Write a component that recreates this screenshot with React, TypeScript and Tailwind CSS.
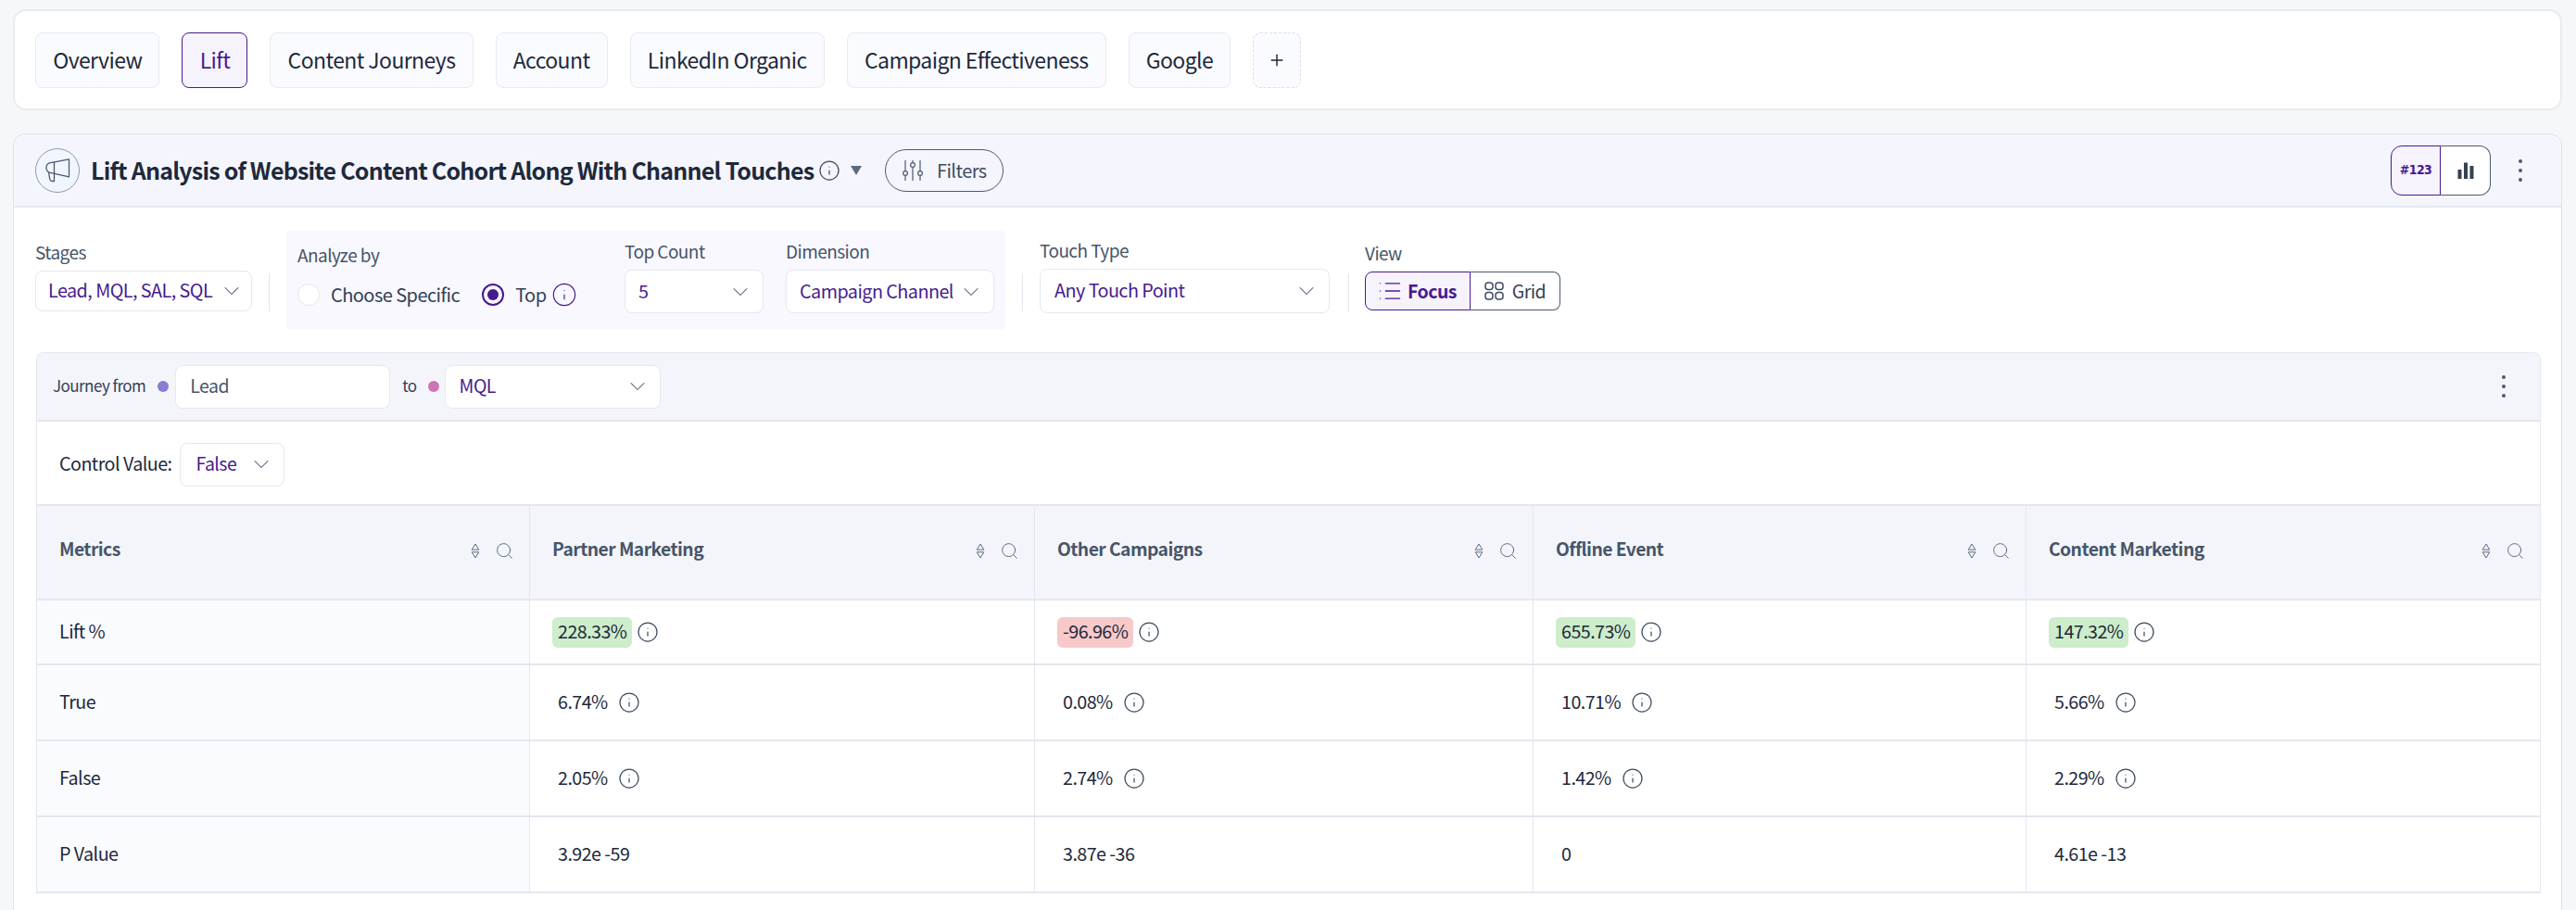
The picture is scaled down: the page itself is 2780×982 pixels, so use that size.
import { ChevronDown, Info, List, Plus, Search } from 'lucide-react';

const tabs = ['Overview', 'Lift', 'Content Journeys', 'Account', 'LinkedIn Organic', 'Campaign Effectiveness', 'Google'];

const columns = [
  { name: 'Metrics', cell: 'w-[532px]' },
  { name: 'Partner Marketing', cell: 'w-[545px]' },
  { name: 'Other Campaigns', cell: 'w-[538px]' },
  { name: 'Offline Event', cell: 'w-[532px]' },
  { name: 'Content Marketing', cell: 'flex-1' },
];

const rows = [
  { label: 'Lift %', height: 'h-[70px]', values: ['228.33%', '-96.96%', '655.73%', '147.32%'], badge: true },
  { label: 'True', height: 'h-[82px]', values: ['6.74%', '0.08%', '10.71%', '5.66%'], info: true },
  { label: 'False', height: 'h-[82px]', values: ['2.05%', '2.74%', '1.42%', '2.29%'], info: true },
  { label: 'P Value', height: 'h-[82px]', values: ['3.92e -59', '3.87e -36', '0', '4.61e -13'] },
];

function Kebab() {
  return (
    <svg width="6" height="26" viewBox="0 0 6 26" className="text-[#4b5a70]">
      <circle cx="3" cy="3" r="2" fill="currentColor" />
      <circle cx="3" cy="13" r="2" fill="currentColor" />
      <circle cx="3" cy="23" r="2" fill="currentColor" />
    </svg>
  );
}

function Megaphone() {
  return (
    <svg width="27" height="26" viewBox="0 0 27 26" fill="none" stroke="#4b5a70" strokeWidth="1.3" strokeLinejoin="round" strokeLinecap="round">
      <path d="M25.5 0.8 L4.5 4.8 C2 5.4 1 7.5 1 10 C1 12.5 2.2 14.6 4.5 15.2 L25.5 19.8 Z" />
      <path d="M9.5 4 V24.5 H7.2 C5.8 24.5 5 23.6 4.8 22.5 L3.5 14.8" />
    </svg>
  );
}

function FilterIcon() {
  return (
    <svg width="22" height="24" viewBox="0 0 22 24" fill="none" stroke="#4b5a70" strokeWidth="1.2">
      <path d="M3 1 V12.5 M3 17.5 V23" />
      <circle cx="3" cy="15" r="2.4" />
      <path d="M11 1 V3.5 M11 8.5 V23" />
      <circle cx="11" cy="6" r="2.4" />
      <path d="M19 1 V12.5 M19 17.5 V23" />
      <circle cx="19" cy="15" r="2.4" />
    </svg>
  );
}

function SortIcon() {
  return (
    <svg width="10" height="17" viewBox="0 0 10 17" fill="none" stroke="#5b6a80" strokeWidth="1" strokeLinejoin="round">
      <path d="M5 1 L8.8 7.2 H1.2 Z" />
      <path d="M5 16 L8.8 9.8 H1.2 Z" />
    </svg>
  );
}

function GridIcon() {
  return (
    <svg width="21" height="20" viewBox="0 0 21 20" fill="none" stroke="#3f4d63" strokeWidth="1.5">
      <rect x="1" y="1" width="8" height="7.5" rx="3" />
      <rect x="12" y="1" width="8" height="7.5" rx="3" />
      <rect x="1" y="11.5" width="8" height="7.5" rx="3" />
      <rect x="12" y="11.5" width="8" height="7.5" rx="3" />
    </svg>
  );
}

function BarsIcon() {
  return (
    <svg width="18" height="18" viewBox="0 0 18 18" fill="#36424f">
      <rect x="0.5" y="8" width="4" height="10" />
      <rect x="7" y="0.5" width="4" height="17.5" />
      <rect x="13.5" y="4" width="4" height="14" />
    </svg>
  );
}

function Select({ value, className }: { value: string; className: string }) {
  return (
    <div className={`flex items-center justify-between rounded-lg border border-[#e6e8f0] bg-white text-[#471a8f] whitespace-nowrap ${className}`}>
      <span className="pb-[2px]">{value}</span>
      <ChevronDown className="w-[28px] h-[28px] text-[#4b5a70]" strokeWidth={0.9} />
    </div>
  );
}

function InfoIcon({ className }: { className?: string }) {
  return <Info className={`w-[24px] h-[24px] text-[#3f4d63] ${className ?? ''}`} strokeWidth={1.25} />;
}

export default function App() {
  return (
    <div className="h-[982px] overflow-hidden bg-[#f6f7f9] pt-[10px] px-[14px] tracking-[-0.55px] font-['Noto_Sans_CJK_SC','Liberation_Sans',sans-serif] text-[#1e293b]">
      <div className="w-[2751px] h-[109px] rounded-[14px] border-2 border-[#e9ebf0] bg-white flex items-center gap-6 px-[22px]">
        {tabs.map((tab) => (
          <div
            key={tab}
            className={`h-[60px] flex items-center px-[18.2px] rounded-lg border text-[23px] tracking-[-0.6px] ${
              tab === 'Lift'
                ? 'border-[#471a8f] bg-[#f6f3fd] text-[#471a8f]'
                : 'border-[#e8eaf2] bg-[#fafbff] text-[#1e293b]'
            }`}
          >
            {tab}
          </div>
        ))}
        <div className="h-[60px] w-[52px] flex items-center justify-center rounded-lg border border-dashed border-[#dcdfea] bg-[#fafbff]">
          <Plus className="w-[20px] h-[20px] text-[#1e293b]" strokeWidth={1.75} />
        </div>
      </div>

      <div className="mt-[25px] w-[2751px] h-[838px] rounded-t-[14px] border border-[#dfe1f2] border-b-0 bg-white">
        <div className="h-[79px] flex items-center pl-[23px] pr-[41px] bg-[#f5f5fe] border-b-2 border-[#e7e9f1] rounded-t-[14px]">
          <div className="w-[48px] h-[48px] rounded-full border border-[#8f9bab] bg-[#f1f6fe] flex items-center justify-center">
            <Megaphone />
          </div>
          <h1 className="ml-[12px] text-[25px] tracking-[-0.78px] font-semibold text-[#1e293b] whitespace-nowrap">
            Lift Analysis of Website Content Cohort Along With Channel Touches
          </h1>
          <InfoIcon className="ml-[5px]" />
          <svg width="12" height="10" viewBox="0 0 12 10" className="ml-[11px]">
            <path d="M0 0 H12 L6 10 Z" fill="#5b6a80" />
          </svg>
          <div className="ml-[25px] w-[128px] h-[46px] rounded-full border border-[#4b5a70] flex items-center justify-center gap-[15px] text-[20px] text-[#3f4d63]">
            <FilterIcon />
            Filters
          </div>
          <div className="ml-auto flex items-stretch h-[54px] w-[108px]">
            <div className="w-[54px] flex items-center justify-center rounded-l-xl border border-[#471a8f] bg-[#f6f3fd] text-[14px] font-bold text-[#471a8f] font-['DejaVu_Sans_Condensed','DejaVu_Sans',sans-serif]">
              #123
            </div>
            <div className="flex-1 flex items-center justify-center rounded-r-xl border border-l-0 border-[#4b5a70] bg-white">
              <BarsIcon />
            </div>
          </div>
          <div className="ml-[29px]">
            <Kebab />
          </div>
        </div>

        <div className="mt-[25px] ml-[23px] h-[107px] flex items-start">
          <div className="mt-[11px] w-[234px]">
            <div className="text-[19px] leading-6 text-[#475569]">Stages</div>
            <Select value="Lead, MQL, SAL, SQL" className="mt-[8px] h-[44px] pl-[13px] pr-[7px] text-[19.8px]" />
          </div>
          <div className="mt-[46px] ml-[18px] w-px h-[41px] bg-[#e4e6ee]" />
          <div className="ml-[18px] w-[776px] h-[107px] rounded bg-[#f8f8fe] pl-[12px] flex items-start">
            <div className="w-[353px] mt-[14px]">
              <div className="text-[19px] leading-6 text-[#475569]">Analyze by</div>
              <div className="mt-[16px] flex items-center text-[20px] text-[#334155]">
                <span className="w-[24px] h-[24px] rounded-full border border-[#e4e6ee] bg-white" />
                <span className="ml-[12px]">Choose Specific</span>
                <span className="ml-[24px] w-[24px] h-[24px] rounded-full border-2 border-[#471a8f] flex items-center justify-center">
                  <span className="w-[12px] h-[12px] rounded-full bg-[#471a8f]" />
                </span>
                <span className="ml-[12px]">Top</span>
                <Info className="ml-[5px] w-[28px] h-[28px] text-[#471a8f]" strokeWidth={1} />
              </div>
            </div>
            <div className="mt-[10px] w-[150px]">
              <div className="text-[19px] leading-6 text-[#475569]">Top Count</div>
              <Select value="5" className="mt-[8px] h-[47px] pl-[14px] pr-[10px] text-[19.8px]" />
            </div>
            <div className="mt-[10px] ml-[24px] w-[225px]">
              <div className="text-[19px] leading-6 text-[#475569]">Dimension</div>
              <Select value="Campaign Channel" className="mt-[8px] h-[47px] pl-[14px] pr-[10px] text-[19.8px]" />
            </div>
          </div>
          <div className="mt-[46px] ml-[18px] w-px h-[41px] bg-[#e4e6ee]" />
          <div className="mt-[9px] ml-[18px] w-[313px]">
            <div className="text-[19px] leading-6 text-[#475569]">Touch Type</div>
            <Select value="Any Touch Point" className="mt-[8px] h-[48px] pl-[15px] pr-[10px] text-[19.8px]" />
          </div>
          <div className="mt-[46px] ml-[20px] w-px h-[41px] bg-[#e4e6ee]" />
          <div className="mt-[12px] ml-[17px]">
            <div className="text-[19px] leading-6 text-[#475569]">View</div>
            <div className="mt-[8px] flex h-[42px] w-[211px] text-[19.5px]">
              <div className="w-[114px] flex items-center justify-center gap-[5px] rounded-l-lg border border-[#471a8f] bg-[#f6f3fd] font-semibold text-[#471a8f]">
                <List className="w-[28px] h-[28px] -ml-[2px]" strokeWidth={1.1} />
                Focus
              </div>
              <div className="flex-1 flex items-center justify-center gap-[9px] rounded-r-lg border border-l-0 border-[#4b5a70] text-[#334155]">
                <GridIcon />
                Grid
              </div>
            </div>
          </div>
        </div>

        <div className="mt-[24px] ml-[24px] w-[2703px] rounded-t-lg border-x border-t border-[#e5e7ef]">
          <div className="h-[74px] flex items-center pl-[17px] pr-[36px] bg-[#f4f5fa] border-b-2 border-[#e5e7ef] rounded-t-lg text-[17px] text-[#334155]">
            <span className="pb-[2px]">Journey from</span>
            <span className="ml-[13px] w-[12px] h-[12px] rounded-full bg-[#8b7bd1]" />
            <div className="ml-[7px] w-[232px] h-[47px] flex items-center px-[15px] pb-[2px] rounded-lg border border-[#e6e8f0] bg-white text-[19.5px] text-[#475569]">Lead</div>
            <span className="ml-[13px] pb-[2px]">to</span>
            <span className="ml-[12px] w-[12px] h-[12px] rounded-full bg-[#cf74b4]" />
            <Select value="MQL" className="ml-[6px] w-[233px] h-[47px] pl-[15px] pr-[10px] text-[19.5px]" />
            <div className="ml-auto">
              <Kebab />
            </div>
          </div>
          <div className="h-[91px] flex items-center pl-[24px] pt-[3px] border-b-2 border-[#e5e7ef]">
            <span className="text-[19.7px] text-[#1e293b] pb-[2px]">Control Value:</span>
            <Select value="False" className="ml-[9px] w-[113px] h-[47px] pl-[16px] pr-[10px] text-[19.5px]" />
          </div>

          <div className="flex h-[102px] bg-[#f4f5fb] border-b-2 border-[#e5e7ef]">
            {columns.map((col, i) => (
              <div key={col.name} className={`${col.cell} relative flex items-start pt-[32px] pl-[24px] ${i < 4 ? 'border-r border-[#e5e7ef]' : ''}`}>
                <span className="text-[19.3px] font-semibold text-[#475569]">{col.name}</span>
                <div className="ml-auto mr-[16px] mt-[6px] flex items-center gap-[16px]">
                  <SortIcon />
                  <Search className="w-[21px] h-[21px] text-[#5b6a80]" strokeWidth={1.1} />
                </div>
              </div>
            ))}
          </div>

          {rows.map((row) => (
            <div key={row.label} className={`flex ${row.height} border-b-2 border-[#e5e7ef]`}>
              <div className="w-[532px] flex items-center pl-[24px] pb-[2px] bg-[#fafbff] border-r border-[#e5e7ef] text-[19.7px]">{row.label}</div>
              {row.values.map((value, i) => (
                <div key={i} className={`${columns[i + 1].cell} flex items-center pl-[24px] text-[19.7px] ${i < 3 ? 'border-r border-[#e5e7ef]' : ''}`}>
                  {row.badge ? (
                    <>
                      <span className={`h-[33px] flex items-center px-[6px] pb-[2px] rounded-md ${value.startsWith('-') ? 'bg-[#f7c9c9]' : 'bg-[#cdedcb]'}`}>{value}</span>
                      <InfoIcon className="ml-[5px]" />
                    </>
                  ) : (
                    <>
                      <span className="pl-[6px] pb-[2px]">{value}</span>
                      {row.info && <InfoIcon className="ml-[11px]" />}
                    </>
                  )}
                </div>
              ))}
            </div>
          ))}
        </div>
      </div>
    </div>
  );
}
